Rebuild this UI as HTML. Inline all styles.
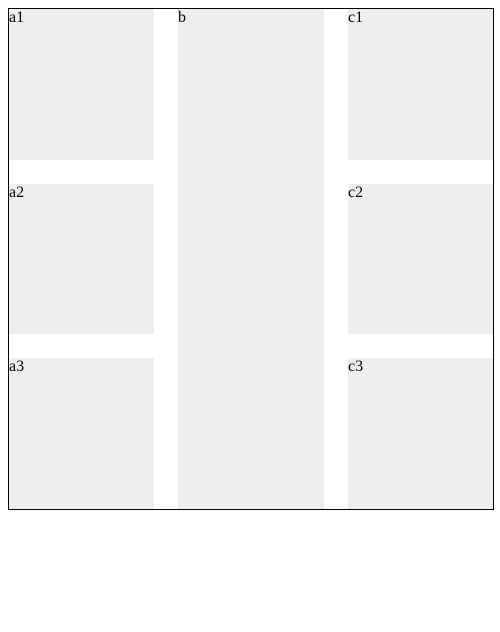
<!DOCTYPE html>
<html><head><style>
body{margin:8px;background:#fff;font-family:"Liberation Serif",serif;font-size:16px;}
.g{display:grid;width:484px;height:500px;border:1px solid #000;grid-template-columns:145px 146px 145px;grid-template-rows:151px 150px 151px;gap:24px;}
.g div{background:#eee;line-height:18px;}
.b{grid-column:2;grid-row:1/4;}
</style></head><body>
<div class="g">
<div style="grid-column:1;grid-row:1">a1</div>
<div class="b">b</div>
<div style="grid-column:3;grid-row:1">c1</div>
<div style="grid-column:1;grid-row:2">a2</div>
<div style="grid-column:3;grid-row:2">c2</div>
<div style="grid-column:1;grid-row:3">a3</div>
<div style="grid-column:3;grid-row:3">c3</div>
</div>
</body></html>
